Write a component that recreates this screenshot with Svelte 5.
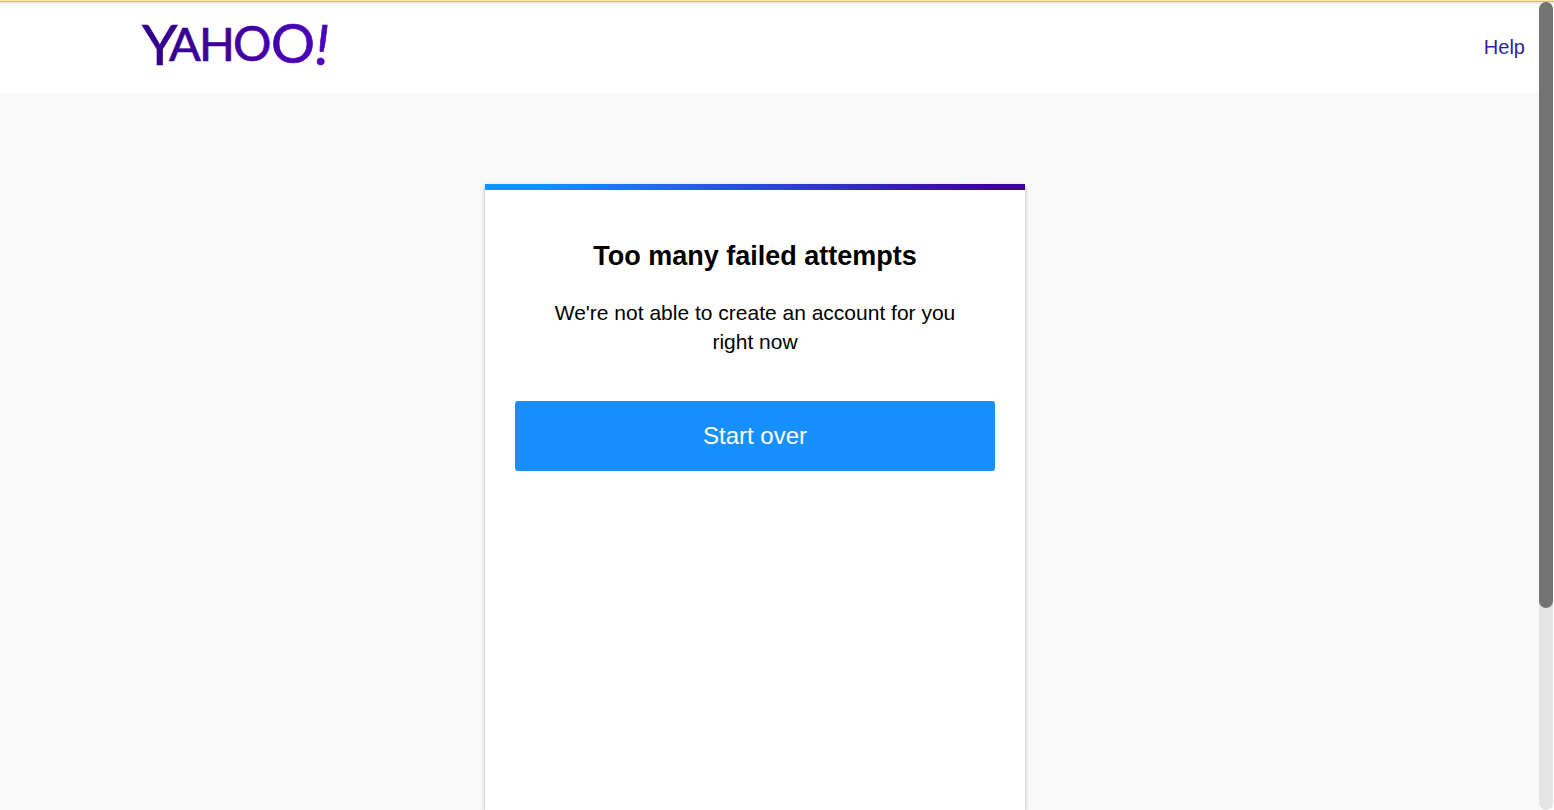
<script>
  let view = $state('error');
</script>

<div class="shell">
  <div class="chrome-edge"></div>
  <div class="viewport">
    <div class="page">
      <header>
        <a class="brand" href="#home" aria-label="Yahoo!">
          <svg width="200" height="77" viewBox="0 0 200 77">
            <defs>
              <linearGradient id="ink" x1="0" y1="0" x2="1" y2="0">
                <stop offset="0" stop-color="#330088" />
                <stop offset="0.5" stop-color="#4000a0" />
                <stop offset="1" stop-color="#4c00c0" />
              </linearGradient>
            </defs>
            <text fill="url(#ink)" stroke="url(#ink)" stroke-width="0.7">
              <tspan class="y" x="2" y="57">Y</tspan><tspan class="a" x="29" y="53">A</tspan><tspan class="h" x="59" y="53">H</tspan><tspan class="o" x="93" y="53">O</tspan><tspan class="oo" x="131" y="55">O</tspan><tspan class="bang" x="175" y="57">!</tspan>
            </text>
          </svg>
        </a>
        <a class="help" href="#help">Help</a>
      </header>
      <main>
        <section class="card">
          <h1>Too many failed attempts</h1>
          <p>We're not able to create an account for you right now</p>
          <button type="button" onclick={() => (view = 'start')}>Start over</button>
        </section>
      </main>
    </div>
    <div class="track"><div class="thumb"></div></div>
  </div>
</div>

<style>
  .shell {
    display: flex;
    flex-direction: column;
    height: 100vh;
    overflow: hidden;
    font-family: "Liberation Sans", Arial, sans-serif;
    color: #000;
    background: #fff;
  }
  .chrome-edge {
    flex: none;
    height: 1px;
    background: #ffe8a6;
    border-bottom: 1px solid #d0b878;
  }
  .viewport {
    flex: 1;
    min-height: 0;
    display: flex;
    padding-right: 1px;
    background: linear-gradient(#e2e5e8, #fff 4px);
  }
  .page {
    flex: 1;
    min-width: 0;
    display: flex;
    flex-direction: column;
  }
  header {
    flex: none;
    box-sizing: border-box;
    height: 91px;
    display: flex;
    justify-content: space-between;
    align-items: center;
    padding: 0 14px 2px 140px;
  }
  .brand {
    display: block;
  }
  svg {
    display: block;
    overflow: visible;
  }
  text {
    font-family: Lato, sans-serif;
  }
  .y {
    font-size: 57px;
  }
  .a {
    font-size: 47px;
  }
  .h {
    font-size: 47px;
  }
  .o {
    font-size: 48px;
  }
  .oo {
    font-size: 55px;
  }
  .bang {
    font-size: 57px;
    font-style: italic;
  }
  .help {
    font-size: 20px;
    line-height: 24px;
    color: #2a1fa8;
    text-decoration: none;
  }
  main {
    flex: 1;
    min-height: 0;
    display: flex;
    justify-content: center;
    padding: 91px 29px 0 0;
    background: #f9f9f9;
  }
  .card {
    box-sizing: border-box;
    width: 540px;
    padding: 48px 30px 0;
    text-align: center;
    background: linear-gradient(90deg, #188fff 10%, #400090 95%) top / 100% 6px no-repeat #fff;
    box-shadow: 0 2px 4px rgba(0, 0, 0, 0.3);
  }
  h1 {
    margin: 0;
    font-size: 27px;
    line-height: 48px;
    font-weight: 700;
  }
  p {
    margin: 18px 30px 45px;
    font-size: 21px;
    line-height: 29px;
  }
  button {
    display: block;
    width: 100%;
    height: 70px;
    border: 0;
    border-radius: 3px;
    background: #188fff;
    color: #fff;
    font: inherit;
    font-size: 24px;
    cursor: pointer;
  }
  .track {
    flex: none;
    width: 14px;
    border-radius: 7px;
    background: #e4e4e4;
  }
  .thumb {
    height: 75%;
    border-radius: 7px;
    background: #737373;
  }
</style>
